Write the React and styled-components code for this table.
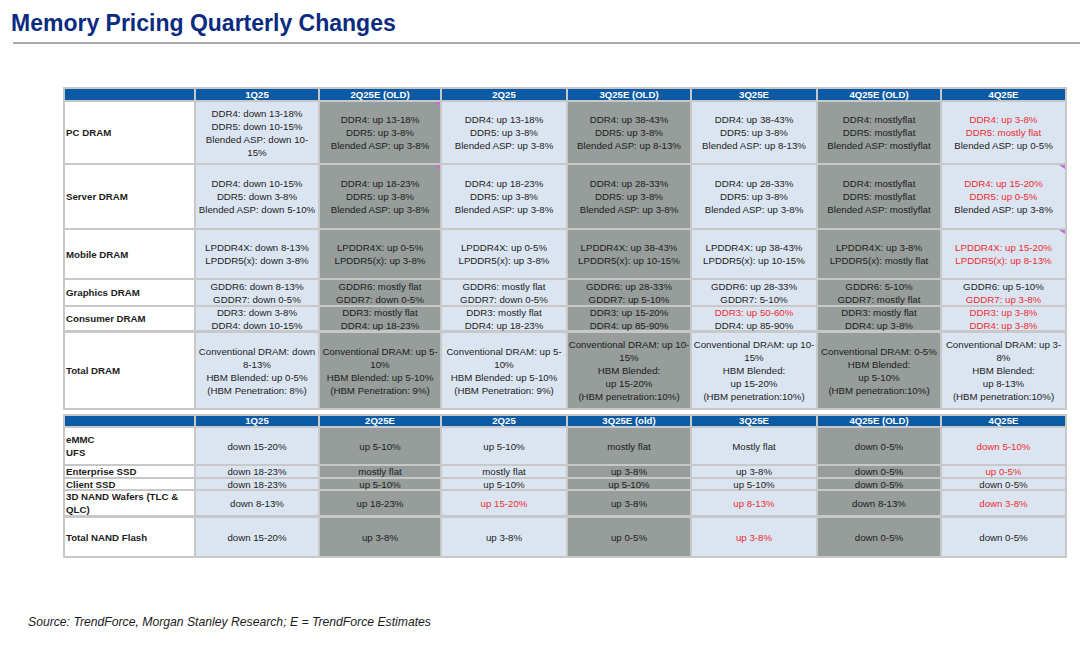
import React from 'react';
import styled, { createGlobalStyle } from 'styled-components';

const GlobalStyle = createGlobalStyle`
  html, body { margin: 0; padding: 0; background: #ffffff; }
  body { font-family: "Liberation Sans", Arial, sans-serif; color: #1c1c1c; }
`;

const COLS = '129px 122px 120px 124px 122px 124px 122px 123px';
const LIGHT = '#dbe5f1';
const GRAY = '#969d9a';
const SHADES = [LIGHT, GRAY, LIGHT, GRAY, LIGHT, GRAY, LIGHT];

const Page = styled.div`
  width: 1080px;
  height: 646px;
  overflow: hidden;
`;

const Header = styled.header`
  margin-left: 13px;
  padding: 11px 0 6px;
  border-bottom: 2px solid #a9a9a9;
`;

const Title = styled.h1`
  margin: 0 0 0 -2px;
  font-size: 23px;
  line-height: 25px;
  font-weight: 700;
  color: #0a2b80;
`;

const Tables = styled.section`
  margin: 43px 0 0 63px;
  display: flex;
  flex-direction: column;
  gap: 4px;
`;

const Grid = styled.div`
  display: grid;
  grid-template-columns: ${COLS};
  grid-template-rows: ${(p) => p.$rows};
  gap: 2px;
  padding: 2px;
  width: max-content;
  background: #c8c8c8;
`;

const HeadCell = styled.div`
  background: #0b5aa5;
  color: #ffffff;
  font-weight: 700;
  font-size: 9.6px;
  line-height: 10px;
  display: flex;
  align-items: center;
  justify-content: center;
  white-space: nowrap;
`;

const LabelCell = styled.div`
  background: #ffffff;
  font-weight: 700;
  font-size: 9.7px;
  line-height: 13px;
  color: #111111;
  padding-left: 1px;
  display: flex;
  flex-direction: column;
  justify-content: center;
  box-sizing: border-box;
  border-top: ${(p) => (p.$thick ? '1px solid #c8c8c8' : '0')};
`;

const Cell = styled.div`
  position: relative;
  background: ${(p) => p.$bg};
  font-size: 9.7px;
  line-height: 13px;
  display: flex;
  flex-direction: column;
  align-items: center;
  justify-content: center;
  text-align: center;
  white-space: nowrap;
  box-sizing: border-box;
  border-top: ${(p) => (p.$thick ? '1px solid #c8c8c8' : '0')};

  &::after {
    content: '';
    display: ${(p) => (p.$flag ? 'block' : 'none')};
    position: absolute;
    top: 0;
    right: 0;
    width: 0;
    height: 0;
    border-top: 4px solid #c36fd3;
    border-left: 6px solid transparent;
  }
`;

const Line = styled.span`
  display: block;
  color: ${(p) => (p.$red ? '#ee2b2f' : '#1c1c1c')};
`;

const Footnote = styled.p`
  margin: 57px 0 0 28px;
  font-size: 12.2px;
  line-height: 14px;
  font-style: italic;
  color: #1c1c1c;
`;

const r = (t) => ({ t, red: true });

const dramHead = ['1Q25', '2Q25E (OLD)', '2Q25', '3Q25E (OLD)', '3Q25E', '4Q25E (OLD)', '4Q25E'];
const nandHead = ['1Q25', '2Q25E', '2Q25', '3Q25E (old)', '3Q25E', '4Q25E (OLD)', '4Q25E'];

const dramRows = [
  {
    label: ['PC DRAM'],
    flags: [1],
    cells: [
      ['DDR4: down 13-18%', 'DDR5: down 10-15%', 'Blended ASP: down 10-', '15%'],
      ['DDR4: up 13-18%', 'DDR5: up 3-8%', 'Blended ASP: up 3-8%'],
      ['DDR4: up 13-18%', 'DDR5: up 3-8%', 'Blended ASP: up 3-8%'],
      ['DDR4: up 38-43%', 'DDR5: up 3-8%', 'Blended ASP: up 8-13%'],
      ['DDR4: up 38-43%', 'DDR5: up 3-8%', 'Blended ASP: up 8-13%'],
      ['DDR4: mostlyflat', 'DDR5: mostlyflat', 'Blended ASP: mostlyflat'],
      [r('DDR4: up 3-8%'), r('DDR5: mostly flat'), 'Blended ASP: up 0-5%'],
    ],
  },
  {
    label: ['Server DRAM'],
    flags: [1, 6],
    cells: [
      ['DDR4: down 10-15%', 'DDR5: down 3-8%', 'Blended ASP: down 5-10%'],
      ['DDR4: up 18-23%', 'DDR5: up 3-8%', 'Blended ASP: up 3-8%'],
      ['DDR4: up 18-23%', 'DDR5: up 3-8%', 'Blended ASP: up 3-8%'],
      ['DDR4: up 28-33%', 'DDR5: up 3-8%', 'Blended ASP: up 3-8%'],
      ['DDR4: up 28-33%', 'DDR5: up 3-8%', 'Blended ASP: up 3-8%'],
      ['DDR4: mostlyflat', 'DDR5: mostlyflat', 'Blended ASP: mostlyflat'],
      [r('DDR4: up 15-20%'), r('DDR5: up 0-5%'), 'Blended ASP: up 3-8%'],
    ],
  },
  {
    label: ['Mobile DRAM'],
    flags: [6],
    cells: [
      ['LPDDR4X: down 8-13%', 'LPDDR5(x): down 3-8%'],
      ['LPDDR4X: up 0-5%', 'LPDDR5(x): up 3-8%'],
      ['LPDDR4X: up 0-5%', 'LPDDR5(x): up 3-8%'],
      ['LPDDR4X: up 38-43%', 'LPDDR5(x): up 10-15%'],
      ['LPDDR4X: up 38-43%', 'LPDDR5(x): up 10-15%'],
      ['LPDDR4X: up 3-8%', 'LPDDR5(x): mostly flat'],
      [r('LPDDR4X: up 15-20%'), r('LPDDR5(x): up 8-13%')],
    ],
  },
  {
    label: ['Graphics DRAM'],
    cells: [
      ['GDDR6: down 8-13%', 'GDDR7: down 0-5%'],
      ['GDDR6: mostly flat', 'GDDR7: down 0-5%'],
      ['GDDR6: mostly flat', 'GDDR7: down 0-5%'],
      ['GDDR6: up 28-33%', 'GDDR7: up 5-10%'],
      ['GDDR6: up 28-33%', 'GDDR7: 5-10%'],
      ['GDDR6: 5-10%', 'GDDR7: mostly flat'],
      ['GDDR6: up 5-10%', r('GDDR7: up 3-8%')],
    ],
  },
  {
    label: ['Consumer DRAM'],
    cells: [
      ['DDR3: down 3-8%', 'DDR4: down 10-15%'],
      ['DDR3: mostly flat', 'DDR4: up 18-23%'],
      ['DDR3: mostly flat', 'DDR4: up 18-23%'],
      ['DDR3: up 15-20%', 'DDR4: up 85-90%'],
      [r('DDR3: up 50-60%'), 'DDR4: up 85-90%'],
      ['DDR3: mostly flat', 'DDR4: up 3-8%'],
      [r('DDR3: up 3-8%'), r('DDR4: up 3-8%')],
    ],
  },
  {
    label: ['Total DRAM'],
    thick: true,
    cells: [
      ['Conventional DRAM: down', '8-13%', 'HBM Blended: up 0-5%', '(HBM Penetration: 8%)'],
      ['Conventional DRAM: up 5-', '10%', 'HBM Blended: up 5-10%', '(HBM Penetration: 9%)'],
      ['Conventional DRAM: up 5-', '10%', 'HBM Blended: up 5-10%', '(HBM Penetration: 9%)'],
      ['Conventional DRAM: up 10-', '15%', 'HBM Blended:', 'up 15-20%', '(HBM penetration:10%)'],
      ['Conventional DRAM: up 10-', '15%', 'HBM Blended:', 'up 15-20%', '(HBM penetration:10%)'],
      ['Conventional DRAM: 0-5%', 'HBM Blended:', 'up 5-10%', '(HBM penetration:10%)'],
      ['Conventional DRAM: up 3-', '8%', 'HBM Blended:', 'up 8-13%', '(HBM penetration:10%)'],
    ],
  },
];

const nandRows = [
  {
    label: ['eMMC', 'UFS'],
    cells: [['down 15-20%'], ['up 5-10%'], ['up 5-10%'], ['mostly flat'], ['Mostly flat'], ['down 0-5%'], [r('down 5-10%')]],
  },
  {
    label: ['Enterprise SSD'],
    cells: [['down 18-23%'], ['mostly flat'], ['mostly flat'], ['up 3-8%'], ['up 3-8%'], ['down 0-5%'], [r('up 0-5%')]],
  },
  {
    label: ['Client SSD'],
    cells: [['down 18-23%'], ['up 5-10%'], ['up 5-10%'], ['up 5-10%'], ['up 5-10%'], ['down 0-5%'], ['down 0-5%']],
  },
  {
    label: ['3D NAND Wafers (TLC &', 'QLC)'],
    cells: [['down 8-13%'], ['up 18-23%'], [r('up 15-20%')], ['up 3-8%'], [r('up 8-13%')], ['down 8-13%'], [r('down 3-8%')]],
  },
  {
    label: ['Total NAND Flash'],
    thick: true,
    cells: [['down 15-20%'], ['up 3-8%'], ['up 3-8%'], ['up 0-5%'], [r('up 3-8%')], ['down 0-5%'], ['down 0-5%']],
  },
];

function PriceTable({ head, rows, rowSizes }) {
  return (
    <Grid $rows={rowSizes}>
      <HeadCell />
      {head.map((h) => (
        <HeadCell key={h}>{h}</HeadCell>
      ))}
      {rows.map((row, ri) => (
        <React.Fragment key={ri}>
          <LabelCell $thick={row.thick}>
            {row.label.map((l) => (
              <Line key={l}>{l}</Line>
            ))}
          </LabelCell>
          {row.cells.map((lines, ci) => (
            <Cell
              key={ci}
              $bg={SHADES[ci]}
              $thick={row.thick}
              $flag={(row.flags || []).includes(ci)}
            >
              {lines.map((l, li) => {
                const item = typeof l === 'string' ? { t: l, red: false } : l;
                return (
                  <Line key={li} $red={item.red}>
                    {item.t}
                  </Line>
                );
              })}
            </Cell>
          ))}
        </React.Fragment>
      ))}
    </Grid>
  );
}

export default function App() {
  return (
    <Page>
      <GlobalStyle />
      <Header>
        <Title>Memory Pricing Quarterly Changes</Title>
      </Header>
      <Tables>
        <PriceTable head={dramHead} rows={dramRows} rowSizes="11px 61px 63px 48px 25px 23px 76px" />
        <PriceTable head={nandHead} rows={nandRows} rowSizes="10px 36px 11px 10px 24px 39px" />
      </Tables>
      <Footnote>Source: TrendForce, Morgan Stanley Research; E = TrendForce Estimates</Footnote>
    </Page>
  );
}
